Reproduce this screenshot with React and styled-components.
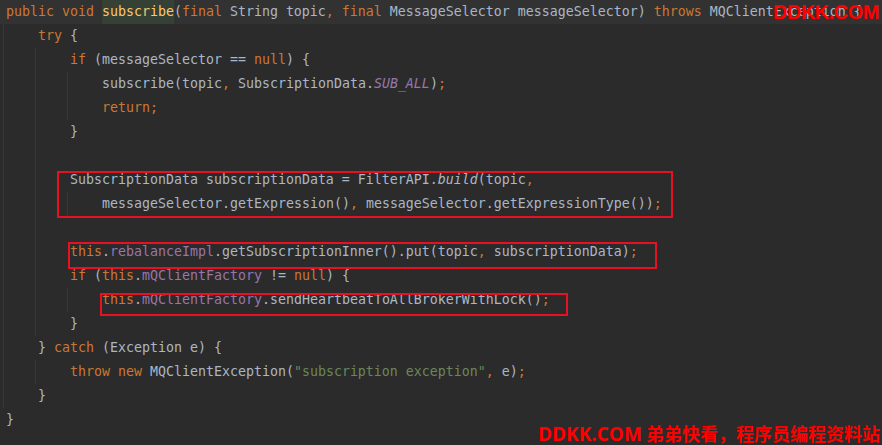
import styled, { createGlobalStyle } from "styled-components";

const GlobalStyle = createGlobalStyle`
    html, body {
        margin: 0;
        padding: 0;
        background: #2b2b2b;
    }
`;

const marks = [
    { x: 57, y: 171, w: 616, h: 47 },
    { x: 68, y: 242, w: 589, h: 27 },
    { x: 100, y: 293, w: 468, h: 23 },
];

const Line = ({ indent = 0, current, children }) => (
    <S.Row $current={current}>
        {Array.from({ length: indent }).map((_, i) => (
            <S.Indent key={i} />
        ))}
        <S.Code>{children}</S.Code>
    </S.Row>
);

const App = () => {
    return (
        <S.Editor>
            <GlobalStyle />
            <Line current>
                <S.Kw>public void </S.Kw>
                <S.Decl>subscribe</S.Decl>(<S.Kw>final </S.Kw>String topic
                <S.Kw>,</S.Kw> <S.Kw>final </S.Kw>MessageSelector messageSelector){" "}
                <S.Kw>throws </S.Kw>MQClientException {"{"}
            </Line>
            <Line indent={1}>
                <S.Kw>try </S.Kw>
                {"{"}
            </Line>
            <Line indent={2}>
                <S.Kw>if </S.Kw>(messageSelector == <S.Kw>null</S.Kw>) {"{"}
            </Line>
            <Line indent={3}>
                subscribe(topic<S.Kw>,</S.Kw> SubscriptionData.
                <S.Field $static>SUB_ALL</S.Field>)<S.Kw>;</S.Kw>
            </Line>
            <Line indent={3}>
                <S.Kw>return;</S.Kw>
            </Line>
            <Line indent={2}>{"}"}</Line>
            <Line indent={2} />
            <Line indent={2}>
                SubscriptionData subscriptionData = FilterAPI.
                <S.Static>build</S.Static>(topic<S.Kw>,</S.Kw>
            </Line>
            <Line indent={3}>
                messageSelector.getExpression()<S.Kw>,</S.Kw>{" "}
                messageSelector.getExpressionType())<S.Kw>;</S.Kw>
            </Line>
            <Line indent={2} />
            <Line indent={2}>
                <S.Kw>this</S.Kw>.<S.Field>rebalanceImpl</S.Field>
                .getSubscriptionInner().put(topic<S.Kw>,</S.Kw> subscriptionData)
                <S.Kw>;</S.Kw>
            </Line>
            <Line indent={2}>
                <S.Kw>if </S.Kw>(<S.Kw>this</S.Kw>.<S.Field>mQClientFactory</S.Field> !={" "}
                <S.Kw>null</S.Kw>) {"{"}
            </Line>
            <Line indent={3}>
                <S.Kw>this</S.Kw>.<S.Field>mQClientFactory</S.Field>
                .sendHeartbeatToAllBrokerWithLock()<S.Kw>;</S.Kw>
            </Line>
            <Line indent={2}>{"}"}</Line>
            <Line indent={1}>
                {"} "}
                <S.Kw>catch </S.Kw>(Exception e) {"{"}
            </Line>
            <Line indent={2}>
                <S.Kw>throw new </S.Kw>MQClientException(
                <S.Str>"subscription exception"</S.Str>
                <S.Kw>,</S.Kw> e)<S.Kw>;</S.Kw>
            </Line>
            <Line indent={1}>{"}"}</Line>
            <Line>{"}"}</Line>

            {marks.map((m, i) => (
                <S.Mark key={i} $x={m.x} $y={m.y} $w={m.w} $h={m.h} />
            ))}

            <S.TopStamp>DDKK.COM</S.TopStamp>
            <S.BottomStamp>
                <S.Csdn>CSDN @DDKK.COM</S.Csdn>
                <S.Latin>DDKK.COM</S.Latin> 弟弟快看，程序员编程资料站
            </S.BottomStamp>
        </S.Editor>
    );
};

const Editor = styled.div`
    position: relative;
    width: 100%;
    min-height: 100vh;
    overflow: hidden;
    background: #2b2b2b;
    font-family: "DejaVu Sans Mono", "Liberation Mono", monospace;
    font-size: 13.29px;
    color: #a9b7c6;
`;
const Row = styled.div`
    display: flex;
    height: 24px;
    line-height: 24px;
    padding-left: 3px;
    white-space: pre;
    background: ${(p) => (p.$current ? "#323232" : "transparent")};
`;
const Indent = styled.span`
    flex: none;
    width: 32px;
    height: 24px;
    box-shadow: inset 1px 0 0 #383838;
`;
const Code = styled.span`
    padding-left: 3px;
`;
const Kw = styled.span`
    color: #cc7832;
`;
const Field = styled.span`
    color: #9876aa;
    font-style: ${(p) => (p.$static ? "italic" : "normal")};
`;
const Static = styled.span`
    font-style: italic;
`;
const Str = styled.span`
    color: #6a8759;
`;
const Decl = styled.span`
    display: inline-block;
    height: 24px;
    color: #ffc66d;
    background: #344134;
`;
const Mark = styled.div`
    position: absolute;
    left: ${(p) => p.$x}px;
    top: ${(p) => p.$y}px;
    width: ${(p) => p.$w}px;
    height: ${(p) => p.$h}px;
    box-sizing: border-box;
    border: 2px solid #e81123;
`;
const TopStamp = styled.div`
    position: absolute;
    top: 1px;
    right: 3px;
    font-family: "Liberation Sans", Arial, sans-serif;
    font-weight: bold;
    font-size: 20px;
    letter-spacing: -0.5px;
    color: #ff0000;
`;
const BottomStamp = styled.div`
    position: absolute;
    right: 2px;
    bottom: 0;
    font-family: "Noto Sans CJK SC", sans-serif;
    font-weight: bold;
    font-size: 18px;
    line-height: 22px;
    color: #ff0000;
    white-space: nowrap;
`;
const Latin = styled.span`
    font-family: "Open Sans", "Noto Sans", sans-serif;
    font-size: 19px;
`;
const Csdn = styled.span`
    position: absolute;
    right: 16px;
    top: 1px;
    font-family: "Liberation Sans", sans-serif;
    font-weight: normal;
    font-size: 10px;
    line-height: 12px;
    color: #8a8a8a;
    z-index: -1;
`;

const S = {
    Editor,
    Row,
    Indent,
    Code,
    Kw,
    Field,
    Static,
    Str,
    Decl,
    Mark,
    TopStamp,
    BottomStamp,
    Latin,
    Csdn,
};

export default App;
